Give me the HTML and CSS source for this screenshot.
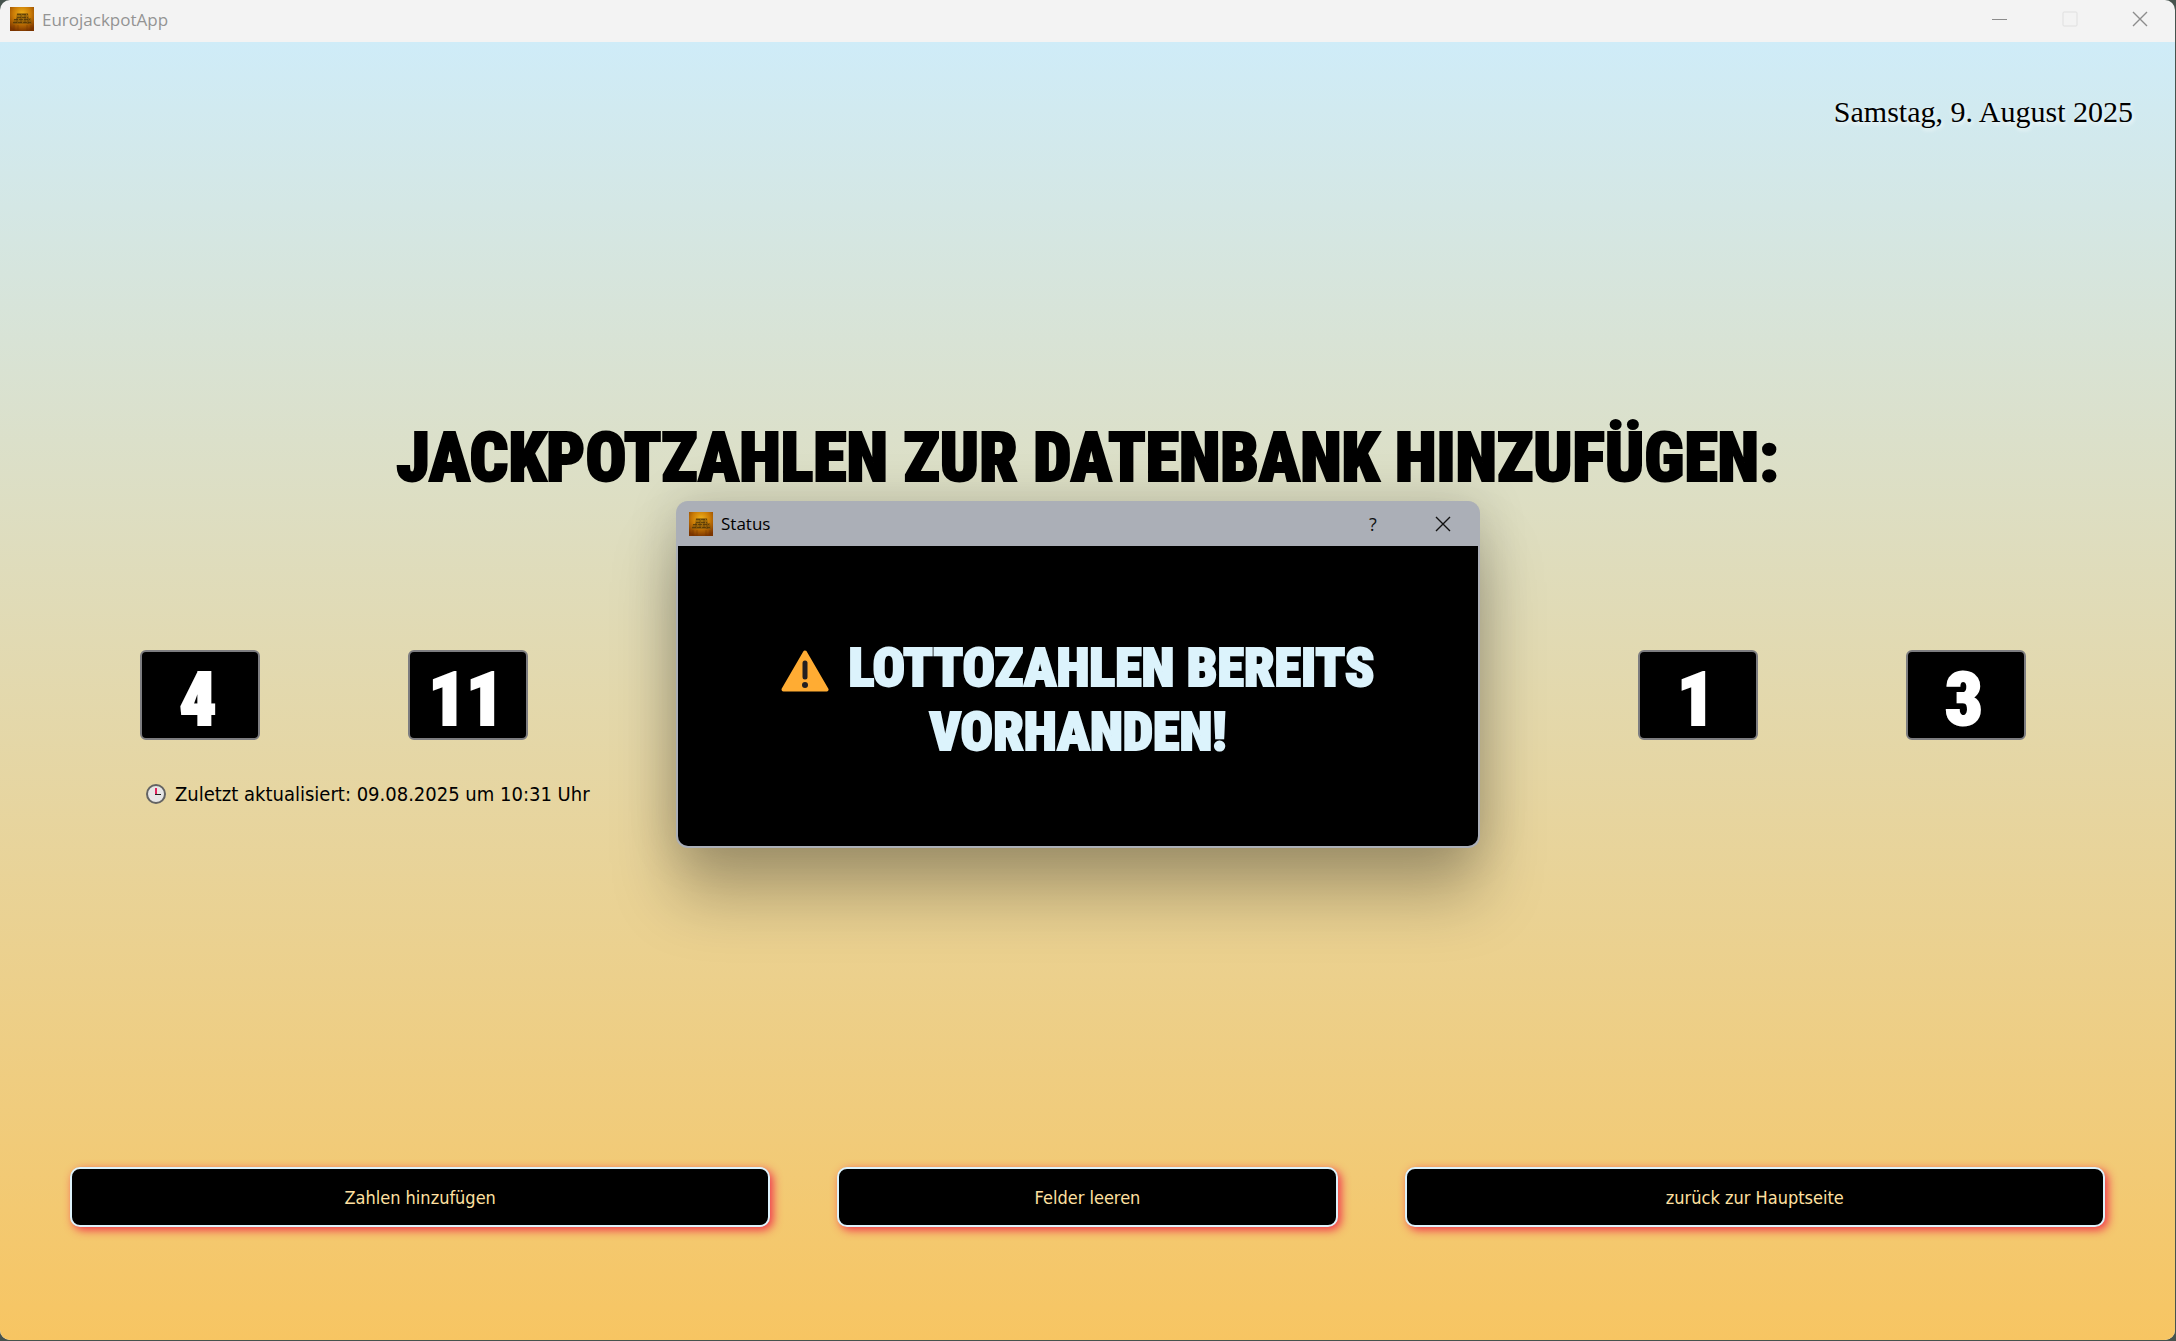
FILE: index.html
```html
<!DOCTYPE html>
<html lang="de">
<head>
<meta charset="utf-8">
<title>EurojackpotApp</title>
<link rel="stylesheet" href="styles.css">
</head>
<body>
<svg class="defs" width="0" height="0" aria-hidden="true">
  <defs>
    <radialGradient id="glow" cx="50%" cy="28%" r="75%">
      <stop offset="0" stop-color="#eeb01a"/>
      <stop offset="0.5" stop-color="#c97a06"/>
      <stop offset="1" stop-color="#7c3500"/>
    </radialGradient>
    <symbol id="app-icon" viewBox="0 0 24 24">
      <rect width="24" height="24" fill="url(#glow)"/>
      <path d="M7 6h11l1 5h2l1 6H3l1-5h2z" fill="#7a5208" opacity=".6"/>
      <path d="M7 7.500h11M7 10.500h11M4 12.500h16M3 15.500h18" stroke="#3f2c08" stroke-width="1" stroke-dasharray="4 1" opacity=".6"/>
      <path d="M7 11v5M11 7v9M15 7v9M18 11v6" stroke="#4c2f06" stroke-width="1" opacity=".5"/>
      <path d="M4 18v6M8 18v6M17 18v6M21 18v6" stroke="#6d3500" stroke-width="1" opacity=".4"/>
    </symbol>
  </defs>
</svg>
<div class="window">
  <header class="titlebar">
    <svg class="app-icon" aria-hidden="true"><use href="#app-icon"/></svg>
    <span class="window-title">EurojackpotApp</span>
    <div class="window-controls">
      <button type="button" aria-label="Minimieren"><svg viewBox="0 0 16 16"><path d="M0 8.500h15" stroke="#8c8c8c"/></svg></button>
      <button type="button" aria-label="Maximieren" disabled><svg viewBox="0 0 16 16"><rect x="1" y="1" width="14" height="14" rx="1" stroke="#dfdfdf"/></svg></button>
      <button type="button" aria-label="Schließen"><svg viewBox="0 0 16 16"><path d="M1 1l14 14M15 1L1 15" stroke="#8c8c8c" stroke-width="1.400"/></svg></button>
    </div>
  </header>
  <main class="page">
    <p class="date">Samstag, 9. August 2025</p>
    <h1 class="heading">JACKPOTZAHLEN ZUR DATENBANK HINZUFÜGEN:</h1>
    <div class="numbers">
      <div class="number-group">
        <input class="number" type="text" value="4" aria-label="Zahl 1">
        <input class="number" type="text" value="11" aria-label="Zahl 2">
      </div>
      <div class="number-group">
        <input class="number" type="text" value="1" aria-label="Eurozahl 1">
        <input class="number" type="text" value="3" aria-label="Eurozahl 2">
      </div>
    </div>
    <p class="updated">
      <svg class="clock" viewBox="0 0 20 20" aria-hidden="true">
        <circle cx="10" cy="10" r="9" fill="#e6e6e6" stroke="#636363" stroke-width="2"/>
        <path d="M10 10V4" stroke="#e0245e" stroke-width="2"/>
        <path d="M9 10.500h6" stroke="#222" stroke-width="1"/>
      </svg>
      <span>Zuletzt aktualisiert: 09.08.2025 um 10:31 Uhr</span>
    </p>
    <div class="actions">
      <button class="action" type="button">Zahlen hinzufügen</button>
      <button class="action" type="button">Felder leeren</button>
      <button class="action" type="button">zurück zur Hauptseite</button>
    </div>
  </main>
  <div class="dialog" role="dialog" aria-labelledby="dialog-title">
    <header class="dialog-bar">
      <svg class="app-icon" aria-hidden="true"><use href="#app-icon"/></svg>
      <span class="dialog-title" id="dialog-title">Status</span>
      <div class="dialog-controls">
        <button type="button" aria-label="Hilfe">?</button>
        <button type="button" aria-label="Schließen"><svg viewBox="0 0 16 16"><path d="M1 1l14 14M15 1L1 15" stroke="#111" stroke-width="1.400"/></svg></button>
      </div>
    </header>
    <div class="dialog-body">
      <p class="message"><svg class="warning" viewBox="0 0 48 42" role="img" aria-label="Warnung"><path d="M24 2.500L45.500 39.500H2.500z" fill="#ffac33" stroke="#ffac33" stroke-width="4" stroke-linejoin="round"/><path d="M24 13v14" stroke="#231f20" stroke-width="5" stroke-linecap="round"/><circle cx="24" cy="35" r="3" fill="#231f20"/></svg>LOTTOZAHLEN BEREITS<br>VORHANDEN!</p>
    </div>
  </div>
</div>
</body>
</html>
```
FILE: styles.css
```css
* {
  box-sizing: border-box;
}

body {
  margin: 0;
  background: #46534d;
  color: #000;
  font-family: "DejaVu Sans Condensed", "DejaVu Sans", sans-serif;
}

button,
input {
  font-family: inherit;
  margin: 0;
}

p,
h1 {
  margin: 0;
}

.defs {
  position: absolute;
}

.window {
  position: relative;
  display: flex;
  flex-direction: column;
  min-height: calc(100vh - 1px);
  margin: 0 1px 1px 0;
  border-radius: 10px;
  overflow: hidden;
  background: #f3f3f3;
}

.titlebar {
  display: flex;
  align-items: center;
  height: 42px;
  padding-bottom: 4px;
  padding-left: 10px;
  color: #949494;
  font-family: "Open Sans", sans-serif;
  font-size: 17px;
}

.app-icon {
  width: 24px;
  height: 24px;
  margin-right: 8px;
}

.window-controls,
.dialog-controls {
  display: flex;
  margin-left: auto;
}

.window-controls button,
.dialog-controls button {
  display: flex;
  align-items: center;
  justify-content: center;
  width: 70px;
  height: 38px;
  padding: 0;
  border: 0;
  background: none;
}

.window-controls svg,
.dialog-controls svg {
  width: 16px;
  height: 16px;
  fill: none;
}

.page {
  display: flex;
  flex: 1;
  flex-direction: column;
  background: linear-gradient(#cfecf8, #f7c562);
  padding-bottom: 113px;
}

.date {
  padding: 52px 42px 0;
  text-align: right;
  font-family: "Liberation Serif", serif;
  font-size: 30px;
  line-height: 36px;
  text-shadow: 1px 2px 4px #fff;
}

.heading,
.number,
.message {
  font-family: "Roboto Condensed", Roboto, sans-serif;
  font-weight: 900;
  -webkit-text-stroke: 2px currentColor;
}

.heading {
  margin-top: 288px;
  text-align: center;
  font-size: 68px;
  line-height: 80px;
}

.numbers {
  display: flex;
  justify-content: space-between;
  margin-top: 152px;
  padding: 0 149px 0 140px;
}

.number-group {
  display: flex;
  gap: 148px;
}

.number {
  width: 120px;
  height: 90px;
  padding: 8px 4px 0 0;
  border: 2px solid #7d7d80;
  border-radius: 6px;
  background: #000;
  color: #fff;
  text-align: center;
  font-size: 74px;
}

.updated {
  display: flex;
  align-items: center;
  gap: 9px;
  margin-top: 40px;
  padding-left: 146px;
  font-size: 20px;
  line-height: 28px;
}

.clock {
  width: 20px;
  height: 20px;
}

.actions {
  display: grid;
  grid-template-columns: 7fr 5fr 7fr;
  gap: 67px;
  margin-top: auto;
  padding: 0 70px;
}

.action {
  height: 60px;
  border: 2px solid #dcf2fb;
  border-radius: 10px;
  background: #000;
  color: #ffe0a0;
  font-size: 18px;
  box-shadow: 3px 3px 10px #f0324b;
}

.dialog {
  position: absolute;
  top: 501px;
  left: 676px;
  width: 804px;
  border: 2px solid #abafb7;
  border-top: 0;
  border-radius: 12px;
  background: #abafb7;
  box-shadow: 0 48px 64px rgba(0, 0, 0, 0.26), 0 0 50px rgba(0, 0, 0, 0.16);
}

.dialog-bar {
  display: flex;
  align-items: center;
  height: 45px;
  padding-left: 11px;
  font-family: "Open Sans", sans-serif;
  font-size: 17px;
}

.dialog-controls button {
  color: #111;
  font-family: "Open Sans", sans-serif;
  font-size: 18px;
}

.dialog-body {
  display: flex;
  align-items: center;
  justify-content: center;
  height: 300px;
  padding-top: 8px;
  border-radius: 0 0 10px 10px;
  background: #000;
}

.message {
  color: #dcf3fc;
  text-align: center;
  font-size: 54px;
  line-height: 64px;
}

.warning {
  width: 48px;
  height: 42px;
  margin-right: 19px;
  vertical-align: -6px;
}
```
